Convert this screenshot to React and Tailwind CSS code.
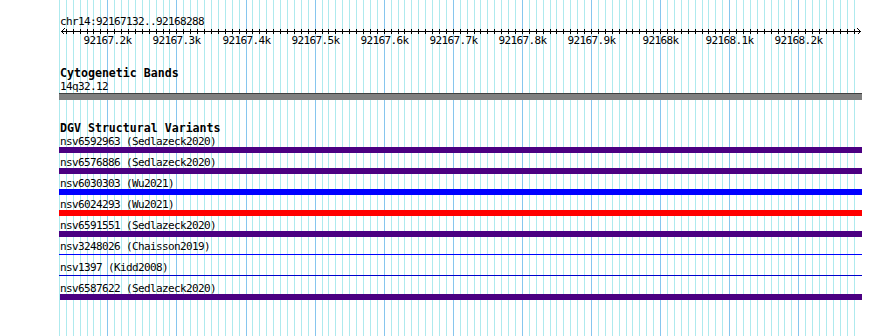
import React from "react";

const START = 92167130;
const END = 92168280;
const PX = 0.691;
const xOf = (bp) => Math.round(107.3 + (bp - 92167200) * PX);

const GRID = [];
for (let bp = START; bp <= END; bp += 10) {
    GRID.push({ bp, x: xOf(bp), major: bp % 100 === 0 });
}

const LABELS = [
    { bp: 92167200, text: '92167.2k' },
    { bp: 92167300, text: '92167.3k' },
    { bp: 92167400, text: '92167.4k' },
    { bp: 92167500, text: '92167.5k' },
    { bp: 92167600, text: '92167.6k' },
    { bp: 92167700, text: '92167.7k' },
    { bp: 92167800, text: '92167.8k' },
    { bp: 92167900, text: '92167.9k' },
    { bp: 92168000, text: '92168k' },
    { bp: 92168100, text: '92168.1k' },
    { bp: 92168200, text: '92168.2k' },
];

const VARIANTS = [
    { id: 'nsv6592963', study: 'Sedlazeck2020', bar: 'thick', color: 'bg-[#4b0082]' },
    { id: 'nsv6576886', study: 'Sedlazeck2020', bar: 'thick', color: 'bg-[#4b0082]' },
    { id: 'nsv6030303', study: 'Wu2021', bar: 'thick', color: 'bg-[#0000ff]' },
    { id: 'nsv6024293', study: 'Wu2021', bar: 'thick', color: 'bg-[#ff0000]' },
    { id: 'nsv6591551', study: 'Sedlazeck2020', bar: 'thick', color: 'bg-[#4b0082]' },
    { id: 'nsv3248026', study: 'Chaisson2019', bar: 'thin', color: 'bg-[#0000ff]' },
    { id: 'nsv1397', study: 'Kidd2008', bar: 'thin', color: 'bg-[#0000cd]' },
    { id: 'nsv6587622', study: 'Sedlazeck2020', bar: 'thick', color: 'bg-[#4b0082]', w: 'w-[802px]', ml: 'ml-[60px]' },
];

const MONO = "font-['DejaVu_Sans_Mono','Liberation_Mono',monospace]";
const SMALL = "text-[11px] tracking-[-0.62px] whitespace-pre";

function Grid() {
    return (
        <svg className="absolute inset-0" width="890" height="336" shapeRendering="crispEdges">
            {GRID.map(g => (
                <line
                    key={g.bp}
                    x1={g.x + 0.5} x2={g.x + 0.5} y1="0" y2="336"
                    stroke={g.major ? '#86c6ee' : '#aeeaee'}
                    strokeWidth="1"
                />
            ))}
        </svg>
    );
}

function Ruler() {
    return (
        <svg width="890" height="20" className="block" shapeRendering="crispEdges">
            <line x1="61" x2="860" y1="3.5" y2="3.5" stroke="#000" />
            {/* arrow heads */}
            <path d="M61.5 3.5 L64.5 0.5 M61.5 3.5 L64.5 6.5" stroke="#000" fill="none" />
            <path d="M860.5 3.5 L857.5 0.5 M860.5 3.5 L857.5 6.5" stroke="#000" fill="none" />
            {GRID.filter(g => g.x > 63 && g.x < 857).map(g => (
                <line key={g.bp} x1={g.x + 0.5} x2={g.x + 0.5} y1="1" y2="6" stroke="#000" />
            ))}
            {LABELS.map(l => (
                <text
                    key={l.bp}
                    x={xOf(l.bp) + 0.5}
                    y="16"
                    textAnchor="middle"
                    fontFamily="DejaVu Sans Mono, Liberation Mono, monospace"
                    fontSize="11"
                    letterSpacing="-0.62"
                    fill="#000"
                >
                    {l.text}
                </text>
            ))}
        </svg>
    );
}

export default function App() {
    return (
        <div className={`relative w-[890px] h-[336px] overflow-hidden bg-white text-black ${MONO}`}>
            <Grid />
            <div className="relative pt-[15px]">
                {/* position line */}
                <div className={`ml-[60px] h-[13px] leading-[13px] ${SMALL}`}>chr14:92167132..92168288</div>
                <Ruler />

                {/* Cytogenetic bands */}
                <div className="mt-[19px] ml-[60px] h-[13px] text-[11.6px] leading-[13px] font-bold whitespace-pre">Cytogenetic Bands</div>
                <div className={`ml-[60px] h-[13px] leading-[13px] ${SMALL}`}>14q32.12</div>
                <div className="ml-[59px] w-[803px] h-[7px] bg-[#808080] border-t border-[#404040]" />

                {/* DGV */}
                <div className="mt-[21px] ml-[60px] h-[14px] text-[11.6px] leading-[14px] font-bold whitespace-pre">DGV Structural Variants</div>
                <div className="flex flex-col">
                    {VARIANTS.map(v => (
                        <div key={v.id} className="h-[21px]">
                            <div className={`ml-[60px] h-[12px] leading-[13px] ${SMALL}`}>{v.id} ({v.study})</div>
                            {v.bar === 'thick' ? (
                                <div className={`${v.ml || 'ml-[59px]'} ${v.w || 'w-[803px]'} h-[6px] ${v.color}`} />
                            ) : (
                                <div className={`ml-[59px] w-[803px] h-[1px] mt-[2px] ${v.color}`} />
                            )}
                        </div>
                    ))}
                </div>
            </div>
        </div>
    );
}
